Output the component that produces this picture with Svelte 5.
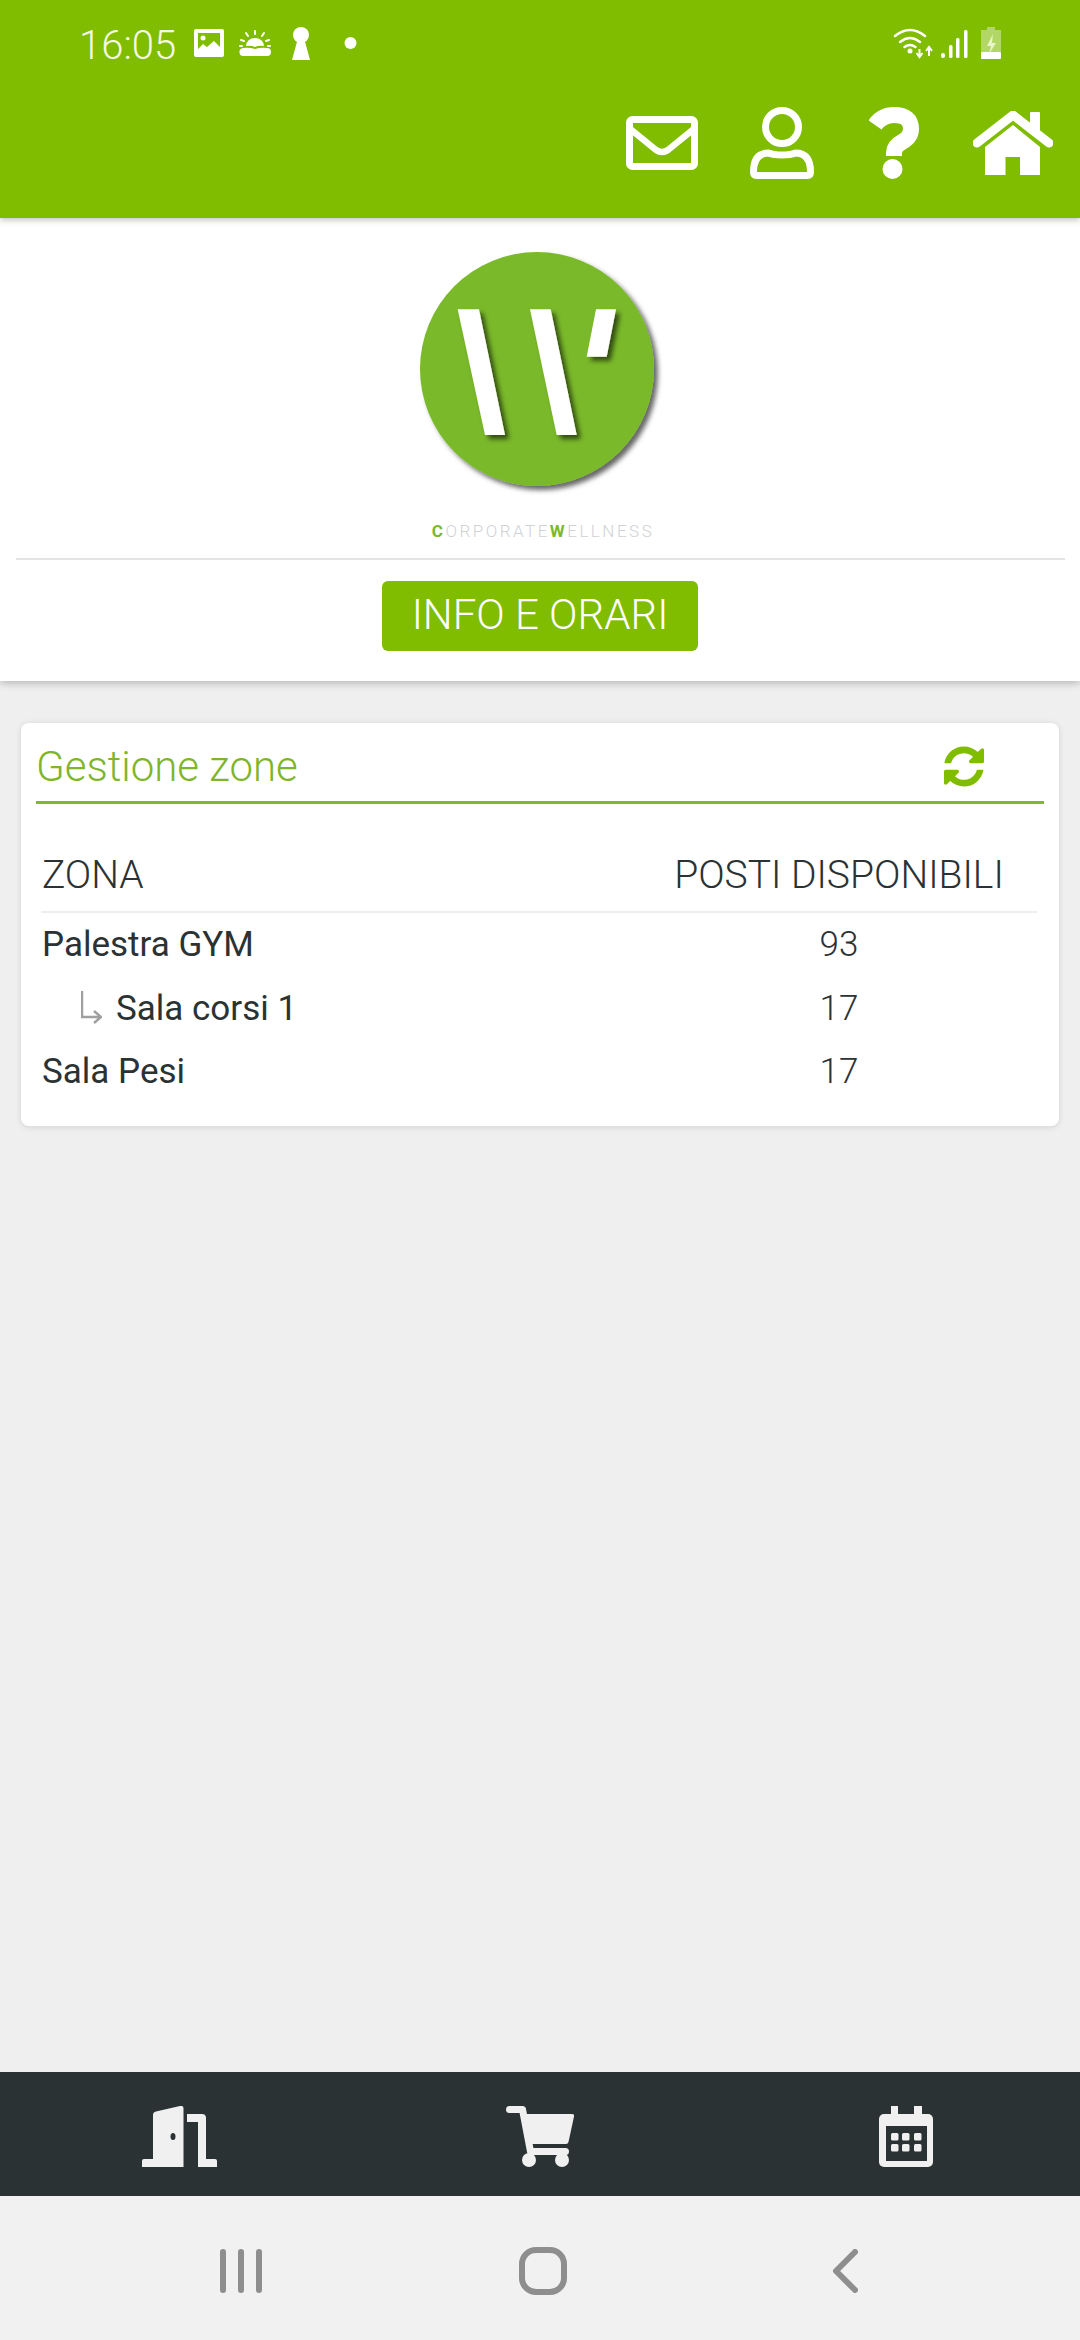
<script>
  let zones = [
    { name: 'Palestra GYM', seats: 93, sub: false },
    { name: 'Sala corsi 1', seats: 17, sub: true },
    { name: 'Sala Pesi', seats: 17, sub: false }
  ];
</script>

<div class="page">
  <header>
    <div class="status">
      <span class="time">16:05</span>
      <svg width="170" height="38" viewBox="190 24 170 38">
        <rect x="194" y="29" width="30" height="28" rx="2" fill="#fff" />
        <path d="M198 33h22v14l-6-6-7 6-4-3-5 5z" fill="#80bc00" />
        <circle cx="203" cy="38" r="2.500" fill="#fff" />
        <path d="M244 56a4 4 0 0 1-1-8q6-1 12 1q6-2 12-1a4 4 0 0 1 0 8z" fill="#fff" />
        <path d="M246 46a9 8 0 0 1 18 0q-5-1-9 1q-4-2-9-1z" fill="#fff" />
        <path d="M255 31v3M246 33l2 3M264 33l-2 3M241 40l3 1M269 40l-3 1M240 46h2M268 46h2" stroke="#fff" stroke-width="2" stroke-linecap="round" />
        <circle cx="301" cy="35" r="8" fill="#fff" />
        <path d="M298 38h6l6 22h-18z" fill="#fff" />
        <circle cx="350.500" cy="43" r="6" fill="#fff" />
      </svg>
      <svg class="status-right" width="112" height="38" viewBox="891 24 112 38">
        <g fill="none" stroke="#fff" stroke-width="2.500" stroke-linecap="round">
          <path d="M895 36q15-12 30 0" />
          <path d="M900 42q10-8 20 0" />
          <path d="M904.500 47q5.500-4 11 0" />
        </g>
        <circle cx="910" cy="51" r="2.500" fill="#fff" />
        <path d="M919.500 49v7M916.500 53l3 4 3-4M929 56v-9M926 51l3-4 3 4" fill="none" stroke="#fff" stroke-width="2" />
        <rect x="941" y="53" width="4" height="5" rx="2" fill="#fff" />
        <rect x="949" y="45" width="3.500" height="13" rx="1.500" fill="#fff" />
        <rect x="956" y="38" width="3.500" height="20" rx="1.500" fill="#fff" />
        <rect x="964" y="30" width="3.500" height="28" rx="1.500" fill="#fff" />
        <path d="M987 27h8v3h6v22h-20v-22h6z" fill="#fff" fill-opacity=".4" />
        <rect x="981" y="52" width="20" height="7" rx="1" fill="#fff" />
        <path d="M993 34l-6 12h4l-2 8 7-11h-4z" fill="#e8f5c8" />
      </svg>
    </div>
    <div class="actions">
      <svg width="72" height="54" viewBox="626 116 72 54">
        <rect x="629.500" y="119.500" width="65" height="47" rx="3" fill="none" stroke="#fff" stroke-width="7" />
        <path d="M629 128l27 22q6 4 12 0l27-22" fill="none" stroke="#fff" stroke-width="6.500" />
      </svg>
      <svg width="64" height="72" viewBox="750 107 64 72">
        <circle cx="782" cy="127" r="16.500" fill="none" stroke="#fff" stroke-width="7" />
        <path d="M753.500 172q0-19 15-19q5 2 13.500 2t13.500-2q15 0 15 19q0 3.500-3 3.500h-51q-3 0-3-3.500z" fill="none" stroke="#fff" stroke-width="7" />
      </svg>
      <svg class="help" width="50" height="72" viewBox="869 107 50 72">
        <path d="M875 125q7-10 19-10q17 0 17 14q0 8-9 13q-8 4-8 11v3" fill="none" stroke="#fff" stroke-width="16" stroke-linejoin="round" />
        <circle cx="892.500" cy="169" r="10" fill="#fff" />
      </svg>
      <svg width="80" height="64" viewBox="973 111 80 64">
        <path d="M977 143l36-28 36 28" fill="none" stroke="#fff" stroke-width="9" stroke-linecap="round" stroke-linejoin="round" />
        <rect x="1030" y="112" width="10" height="20" rx="1" fill="#fff" />
        <path d="M985 175v-28l28-22 27 22v28h-20v-18h-14.500v18z" fill="#fff" />
      </svg>
    </div>
  </header>

  <section class="brand">
    <svg class="logo" width="260" height="260" viewBox="410 240 260 260">
      <defs>
        <filter id="soft" x="-20%" y="-20%" width="150%" height="150%">
          <feDropShadow dx="4" dy="4" stdDeviation="2.500" flood-color="#000" flood-opacity=".6" />
        </filter>
      </defs>
      <circle cx="537" cy="369" r="117" fill="#7ab92c" filter="url(#soft)" />
      <g fill="#fff" filter="url(#soft)">
        <path d="M457.700 309.300H479L505 435H485z" />
        <path d="M530 309.300H550.700L576.700 435H556.700z" />
        <path d="M596 309.300H616L606.700 356.700H586.700z" />
      </g>
    </svg>
    <div class="wordmark"><b>C</b>ORPORATE<b>W</b>ELLNESS</div>
    <hr />
    <button type="button">INFO E ORARI</button>
  </section>

  <main>
    <div class="card">
      <div class="card-title">
        <h2>Gestione zone</h2>
        <svg width="40" height="41" viewBox="128 128 1536 1536">
          <path fill="#80bc00" d="M1639 1056q0 5-1 7-64 268-268 434.500t-478 166.500q-146 0-282.500-55t-243.500-157l-129 129q-19 19-45 19t-45-19-19-45v-448q0-26 19-45t45-19h448q26 0 45 19t19 45-19 45l-137 137q71 66 161 102t187 36q134 0 250-65t186-179q11-17 53-117 8-23 30-23h192q13 0 22.500 9.500t9.500 22.500zm25-800v448q0 26-19 45t-45 19h-448q-26 0-45-19t-19-45 19-45l138-138q-148-137-349-137-134 0-250 65t-186 179q-11 17-53 117-8 23-30 23h-199q-13 0-22.500-9.500t-9.500-22.500v-7q65-268 270-434.500t480-166.500q146 0 284 55.500t245 156.500l130-129q19-19 45-19t45 19 19 45z" />
        </svg>
      </div>
      <table>
        <thead>
          <tr>
            <th class="zone">ZONA</th>
            <th class="seats">POSTI DISPONIBILI</th>
          </tr>
        </thead>
        <tbody>
          {#each zones as z}
            <tr>
              <td class="zone">
                {#if z.sub}
                  <span class="child">
                    <svg width="21" height="34" viewBox="82 996 21 34">
                      <path d="M83 996v26h18M95 1016l7 6-7 6" fill="none" stroke="#a0a0a0" stroke-width="2.500" />
                    </svg>
                    {z.name}
                  </span>
                {:else}
                  {z.name}
                {/if}
              </td>
              <td class="seats">{z.seats}</td>
            </tr>
          {/each}
        </tbody>
      </table>
    </div>
  </main>

  <div class="tabs">
    <svg class="door" width="76" height="61" viewBox="142 2106 76 61">
      <path d="M142 2161q0-2 2-2h9v-44q0-3 3-3.500l24-5.500q3.500-.5 3.500 2v60h-41.500z" fill="#f0f0f0" />
      <path d="M187 2114h15q4 0 4 4v41h9q2 0 2 2v6h-19v-45h-11z" fill="#f0f0f0" />
      <ellipse cx="173" cy="2136.500" rx="2.500" ry="3.500" fill="#2b3234" />
    </svg>
    <svg class="cart" width="68" height="61" viewBox="506 2106 68 61">
      <path d="M526 2114h46q2.500 0 2 2.500l-5.500 25.500q-.5 2-2.500 2h-35z" fill="#f0f0f0" />
      <path d="M509.500 2109.500h13l8 42h35" fill="none" stroke="#f0f0f0" stroke-width="7" stroke-linecap="round" stroke-linejoin="round" />
      <circle cx="529" cy="2160" r="7" fill="#f0f0f0" />
      <circle cx="562" cy="2160" r="7" fill="#f0f0f0" />
    </svg>
    <svg class="cal" width="54" height="61" viewBox="879 2106 54 61">
      <path d="M891 2106h7v8h-7zM914 2106h8v8h-8z" fill="#f0f0f0" />
      <rect x="879" y="2114" width="54" height="53" rx="5" fill="#f0f0f0" />
      <rect x="886" y="2126" width="41" height="35" fill="#2b3234" />
      <g fill="#f0f0f0">
        <rect x="891" y="2133" width="7.500" height="7.500" rx="1.500" />
        <rect x="902" y="2133" width="7.500" height="7.500" rx="1.500" />
        <rect x="914" y="2133" width="7.500" height="7.500" rx="1.500" />
        <rect x="891" y="2144" width="7.500" height="7.500" rx="1.500" />
        <rect x="902" y="2144" width="7.500" height="7.500" rx="1.500" />
        <rect x="914" y="2144" width="7.500" height="7.500" rx="1.500" />
      </g>
    </svg>
  </div>

  <nav>
    <svg class="recents" width="42" height="44" viewBox="220 2249 42 44">
      <rect x="220" y="2249" width="6" height="44" rx="3" fill="#8e8e8e" />
      <rect x="238" y="2249" width="6" height="44" rx="3" fill="#8e8e8e" />
      <rect x="256" y="2249" width="6" height="44" rx="3" fill="#8e8e8e" />
    </svg>
    <svg class="home" width="48" height="48" viewBox="519 2247 48 48">
      <rect x="522" y="2250" width="42" height="42" rx="14" fill="none" stroke="#8e8e8e" stroke-width="6" />
    </svg>
    <svg class="back" width="26" height="44" viewBox="832 2249 26 44">
      <path d="M855 2252l-19 19 19 19" fill="none" stroke="#8e8e8e" stroke-width="6" stroke-linecap="round" stroke-linejoin="round" />
    </svg>
  </nav>
</div>

<style>
  :global(body) {
    font-family: Roboto, sans-serif;
    background-color: #efefef;
    color: #2b3234;
  }

  svg {
    display: block;
    flex: none;
  }

  .page {
    display: flex;
    flex-direction: column;
    height: 2340px;
  }

  header {
    position: relative;
    z-index: 2;
    height: 218px;
    box-sizing: border-box;
    padding-top: 24px;
    background-color: #80bc00;
    box-shadow: 0 2px 6px rgba(0, 0, 0, 0.25);
  }

  .status {
    display: flex;
    align-items: center;
    height: 38px;
    padding-left: 79px;
    padding-right: 77px;
  }

  .time {
    width: 111px;
    margin-top: 5px;
    color: #f4fae6;
    font-size: 40px;
    font-weight: 300;
    line-height: 38px;
  }

  .status-right {
    margin-left: auto;
  }

  .actions {
    display: flex;
    justify-content: flex-end;
    align-items: center;
    height: 72px;
    margin-top: 45px;
    padding-right: 27px;
    gap: 52px;
  }

  .help {
    margin: 0 2px 0 3px;
  }

  .brand {
    position: relative;
    z-index: 1;
    display: flex;
    flex-direction: column;
    align-items: center;
    padding: 22px 0 30px;
    background-color: #fff;
    box-shadow: 0 2px 8px rgba(0, 0, 0, 0.25);
  }

  .wordmark {
    height: 18px;
    margin-top: 22px;
    padding-left: 6px;
    color: #cfd2d4;
    font-size: 17px;
    font-weight: 300;
    line-height: 18px;
    letter-spacing: 2.5px;
  }

  .wordmark b {
    color: #7ab92c;
    font-weight: 700;
  }

  hr {
    align-self: stretch;
    height: 2px;
    margin: 18px 15px 21px 16px;
    border: 0;
    background-color: #e4e4e4;
  }

  button {
    width: 316px;
    height: 70px;
    padding: 0 0 3px;
    border: 0;
    border-radius: 6px;
    background-color: #80bc00;
    color: #fff;
    font-family: Roboto, sans-serif;
    font-size: 42px;
    font-weight: 300;
  }

  main {
    flex: 1;
    padding: 42px 21px 0;
    background-color: #efefef;
  }

  .card {
    height: 403px;
    box-sizing: border-box;
    padding: 0 15px;
    border-radius: 8px;
    background-color: #fff;
    box-shadow: 0 1px 6px rgba(0, 0, 0, 0.12);
  }

  .card-title {
    display: flex;
    justify-content: space-between;
    align-items: center;
    height: 81px;
    box-sizing: border-box;
    padding: 8px 60px 0 0;
    border-bottom: 3px solid #84b52f;
  }

  h2 {
    margin: 0;
    color: #7fb52a;
    font-size: 42px;
    font-weight: 300;
  }

  table {
    width: 996px;
    margin: 23px 0 0 5px;
    border-collapse: collapse;
    table-layout: fixed;
  }

  th {
    height: 85px;
    box-sizing: border-box;
    padding: 12px 0 0;
    border-bottom: 2px solid #eee;
    font-size: 39px;
    font-weight: 300;
  }

  td {
    height: 63.5px;
    padding: 0;
    font-size: 35px;
  }

  .zone {
    padding-left: 1px;
    text-align: left;
  }

  .seats {
    width: 396px;
    font-weight: 300;
    text-align: center;
  }

  .child {
    display: flex;
    align-items: center;
    gap: 14px;
    padding-left: 39px;
  }

  .tabs {
    display: flex;
    align-items: center;
    height: 124px;
    box-sizing: border-box;
    padding: 5px 0 0 142px;
    background-color: #2b3234;
  }

  .cart {
    margin-left: 288px;
  }

  .cal {
    margin-left: 305px;
  }

  nav {
    display: flex;
    align-items: center;
    height: 144px;
    box-sizing: border-box;
    padding: 6px 0 0 220px;
    background-color: #f1f1f1;
  }

  .home {
    margin-left: 257px;
  }

  .back {
    margin-left: 265px;
  }
</style>
